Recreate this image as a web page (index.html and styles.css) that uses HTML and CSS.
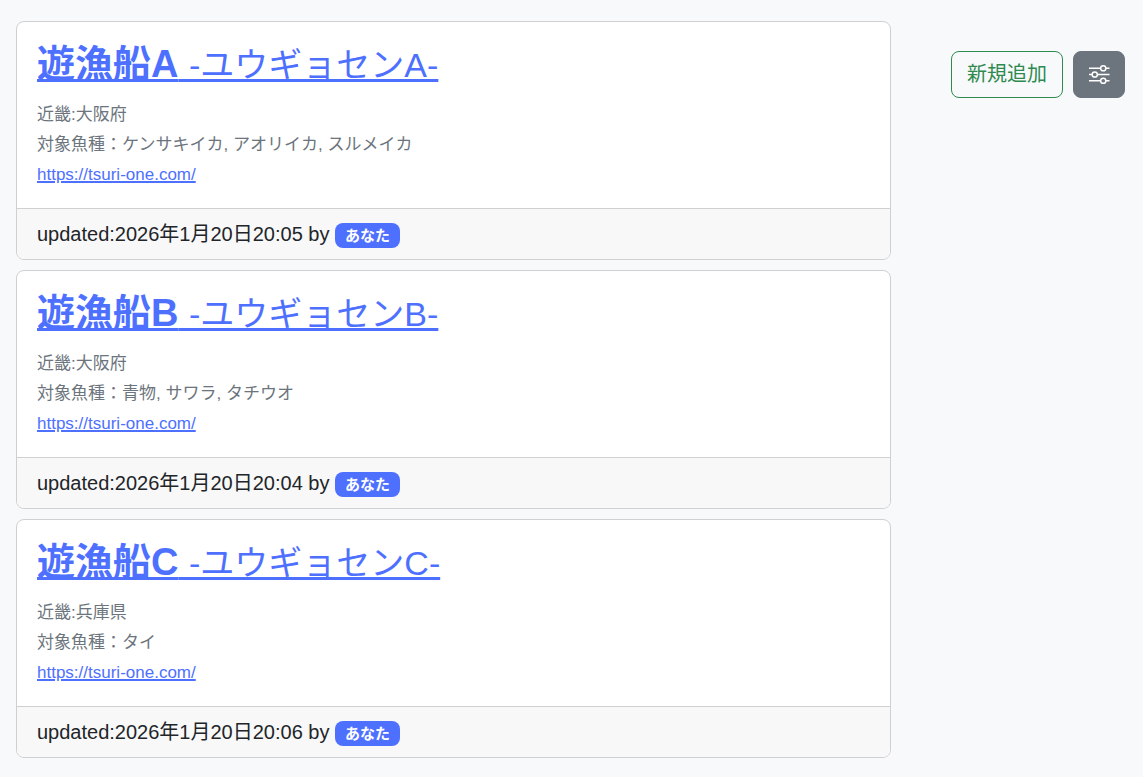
FILE: index.html
```html
<!DOCTYPE html>
<html lang="ja">
<head>
<meta charset="utf-8">
<title>遊漁船</title>
<link rel="stylesheet" href="styles.css">
</head>
<body>
<div class="page">
  <main class="list">
    <article class="card">
      <div class="card-body">
        <h2 class="title"><a href="#a"><strong>遊漁船A</strong> <span class="kana">-ユウギョセンA-</span></a></h2>
        <p class="meta">近畿:大阪府</p>
        <p class="meta">対象魚種：ケンサキイカ, アオリイカ, スルメイカ</p>
        <p class="meta"><a href="https://tsuri-one.com/">https://tsuri-one.com/</a></p>
      </div>
      <footer class="card-footer">updated:2026年1月20日20:05 by <span class="badge">あなた</span></footer>
    </article>
    <article class="card">
      <div class="card-body">
        <h2 class="title"><a href="#b"><strong>遊漁船B</strong> <span class="kana">-ユウギョセンB-</span></a></h2>
        <p class="meta">近畿:大阪府</p>
        <p class="meta">対象魚種：青物, サワラ, タチウオ</p>
        <p class="meta"><a href="https://tsuri-one.com/">https://tsuri-one.com/</a></p>
      </div>
      <footer class="card-footer">updated:2026年1月20日20:04 by <span class="badge">あなた</span></footer>
    </article>
    <article class="card">
      <div class="card-body">
        <h2 class="title"><a href="#c"><strong>遊漁船C</strong> <span class="kana">-ユウギョセンC-</span></a></h2>
        <p class="meta">近畿:兵庫県</p>
        <p class="meta">対象魚種：タイ</p>
        <p class="meta"><a href="https://tsuri-one.com/">https://tsuri-one.com/</a></p>
      </div>
      <footer class="card-footer">updated:2026年1月20日20:06 by <span class="badge">あなた</span></footer>
    </article>
  </main>
  <aside class="actions">
    <button type="button" class="btn btn-add">新規追加</button>
    <button type="button" class="btn btn-filter" aria-label="絞り込み">
      <svg class="icon" viewBox="0 0 20 21" fill="none" stroke="currentColor" stroke-width="1.5" aria-hidden="true"><path d="M0 4.250h11.500M17 4.250h3.500M0 10.500h3M8.500 10.500h12M0 16.750h11.500M17 16.750h3.500"/><circle cx="14.250" cy="4.250" r="2.600"/><circle cx="5.750" cy="10.500" r="2.600"/><circle cx="14.250" cy="16.750" r="2.600"/></svg>
    </button>
  </aside>
</div>
</body>
</html>
```
FILE: styles.css
```css
* {
  box-sizing: border-box;
}

body {
  margin: 0;
  background: #f8f9fb;
  color: #212529;
  font-family: "Liberation Sans", "Noto Sans CJK JP", sans-serif;
  font-size: 20px;
  line-height: 30px;
}

a {
  color: #4e70ff;
}

.page {
  display: flex;
  align-items: flex-start;
  justify-content: space-between;
  gap: 60px;
  padding: 21px 18px 18px 16px;
}

.list {
  flex: 1;
  display: flex;
  flex-direction: column;
  gap: 10px;
}

.card {
  overflow: hidden;
  background: #fff;
  border: 1px solid #cfd0d1;
  border-radius: 8px;
}

.card-body {
  padding: 20px 20px 18px;
}

.title {
  margin: 0 0 12px;
  font-size: 38px;
  line-height: 45px;
  font-weight: 400;
}

.title a {
  text-decoration-thickness: 3px;
}

.kana {
  font-size: 34px;
}

.meta {
  margin: 0;
  color: #6c757d;
  font-size: 17px;
}

.meta a {
  text-decoration-thickness: 2px;
}

.card-footer {
  padding: 10px 20px;
  background: #f8f8f8;
  border-top: 1px solid #cfd0d1;
}

.badge {
  display: inline-block;
  padding: 5px 10px;
  border-radius: 8px;
  background: #4e70ff;
  color: #fff;
  font-size: 15px;
  font-weight: 700;
  line-height: 15px;
}

.actions {
  display: flex;
  gap: 10px;
  padding-top: 30px;
}

.btn {
  display: flex;
  align-items: center;
  padding: 7px 15px;
  border: 1px solid;
  border-radius: 8px;
  font: inherit;
  line-height: 31px;
}

.btn-add {
  border-color: #2f8a50;
  background: transparent;
  color: #2f8a50;
}

.btn-filter {
  border-color: #6c757d;
  background: #6c757d;
  color: #fff;
}

.icon {
  width: 20px;
  height: 21px;
  overflow: visible;
}
```
